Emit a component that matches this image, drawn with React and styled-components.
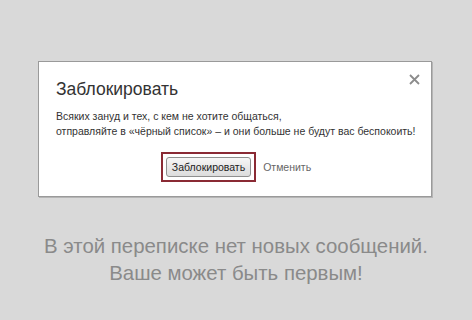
import styled, { createGlobalStyle } from "styled-components";

const GlobalStyle = createGlobalStyle`
  html, body {
    margin: 0;
    padding: 0;
    background: #d9d9d9;
    font-family: "Liberation Sans", Arial, sans-serif;
  }
`;

const Page = styled.div`
  width: 472px;
  height: 320px;
  padding-top: 61px;
  box-sizing: border-box;
  display: flex;
  flex-direction: column;
  align-items: center;
`;

const Dialog = styled.div`
  position: relative;
  width: 394px;
  height: 136px;
  box-sizing: border-box;
  margin-left: -2px;
  background: #fff;
  border: 1px solid #9a9a9a;
  box-shadow: 1px 1px 0 #b5b5b5;
  padding: 16px 17px 0;
`;

const Close = styled.button`
  position: absolute;
  top: 10px;
  right: 10px;
  border: 0;
  background: none;
  padding: 0;
  width: 14px;
  height: 14px;
  cursor: pointer;
  display: flex;
  align-items: center;
  justify-content: center;
`;

const Title = styled.h2`
  margin: 0;
  font-size: 17.5px;
  font-weight: normal;
  color: #333;
  line-height: 22px;
`;

const Text = styled.p`
  margin: 9px 0 0;
  font-size: 10.5px;
  line-height: 15px;
  color: #333;
  white-space: nowrap;
`;

const Actions = styled.div`
  display: flex;
  align-items: center;
  justify-content: center;
  gap: 7px;
  margin-top: 13px;
  padding-left: 2px;
`;

const Focus = styled.div`
  border: 2px solid #8a2a34;
  padding: 3px;
`;

const Button = styled.button`
  font-family: "Liberation Sans", Arial, sans-serif;
  font-size: 10.5px;
  color: #222;
  height: 20px;
  padding: 0 5px;
  border: 1px solid #8f8f8f;
  border-radius: 3px;
  background: linear-gradient(#f6f6f6, #dcdcdc);
`;

const Link = styled.span`
  font-size: 10.5px;
  color: #666;
`;

const Empty = styled.div`
  margin-top: 36px;
  text-align: center;
  font-size: 20.4px;
  line-height: 27px;
  color: #8a8a8a;
`;

export default function App() {
  return (
    <>
      <GlobalStyle />
      <Page>
        <Dialog>
          <Close aria-label="Закрыть">
            <svg width="11" height="11" viewBox="0 0 11 11">
              <path d="M1 1L10 10M10 1L1 10" stroke="#8c8c8c" strokeWidth="1.8" />
            </svg>
          </Close>
          <Title>Заблокировать</Title>
          <Text>
            Всяких зануд и тех, с кем не хотите общаться,
            <br />
            отправляйте в «чёрный список» – и они больше не будут вас беспокоить!
          </Text>
          <Actions>
            <Focus>
              <Button>Заблокировать</Button>
            </Focus>
            <Link>Отменить</Link>
          </Actions>
        </Dialog>
        <Empty>
          В этой переписке нет новых сообщений.
          <br />
          Ваше может быть первым!
        </Empty>
      </Page>
    </>
  );
}
